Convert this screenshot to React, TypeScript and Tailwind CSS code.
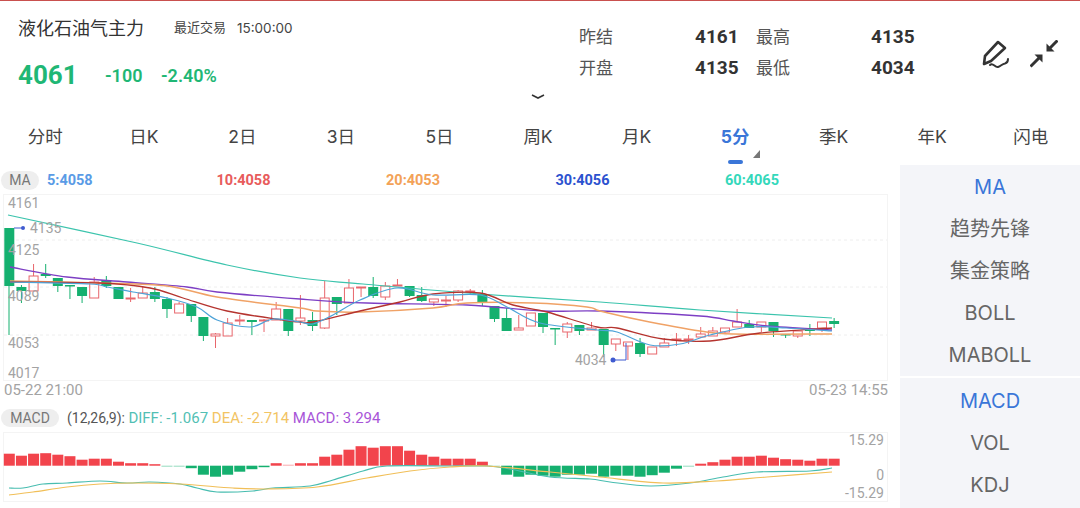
import React from 'react';

// [wickTop, bodyTop, bodyBottom, wickBottom, up]
type Candle = [number, number, number, number, 0 | 1];
type Pt = [number, number];

const candles: Candle[] = [
  [228, 228, 286, 335, 0], [285, 287, 291, 303, 0], [264, 276, 291, 291, 1], [264, 274, 276, 278, 0],
  [278, 278, 286, 292, 0], [285, 285, 286, 299, 0], [287, 287, 296, 303, 0], [277, 282, 298, 298, 1],
  [276, 280, 286, 288, 0], [287, 287, 299, 299, 0], [288, 298, 299, 302, 1], [286, 293, 298, 298, 1],
  [287, 292, 299, 302, 0], [297, 299, 309, 318, 0], [302, 304, 313, 313, 1], [304, 304, 316, 322, 0],
  [317, 317, 336, 341, 0], [333, 334, 336, 348, 1], [318, 323, 336, 336, 1], [315, 320, 321, 325, 1],
  [320, 320, 322, 335, 0], [319, 320, 321, 332, 1], [302, 309, 320, 320, 1], [309, 309, 331, 336, 0],
  [295, 318, 321, 325, 1], [312, 320, 326, 331, 0], [281, 298, 328, 329, 1], [297, 297, 304, 315, 0],
  [279, 288, 303, 303, 1], [287, 287, 288, 297, 1], [277, 287, 296, 298, 0], [282, 286, 297, 300, 1],
  [279, 285, 286, 286, 1], [286, 286, 296, 297, 0], [287, 295, 301, 302, 0], [299, 299, 302, 306, 1],
  [296, 300, 301, 307, 1], [290, 291, 300, 302, 1], [289, 291, 292, 295, 1], [290, 294, 303, 306, 0],
  [306, 306, 319, 322, 0], [308, 318, 331, 331, 0], [315, 328, 330, 330, 1], [313, 313, 326, 326, 1],
  [313, 313, 327, 333, 0], [328, 328, 329, 345, 0], [322, 324, 332, 338, 1], [325, 325, 331, 335, 0],
  [322, 328, 330, 330, 1], [329, 329, 345, 357, 0], [339, 339, 344, 351, 1], [342, 342, 346, 360, 1],
  [338, 343, 354, 357, 0], [347, 347, 354, 354, 1], [338, 343, 347, 347, 1], [333, 339, 340, 346, 1],
  [335, 339, 340, 344, 1], [327, 334, 337, 338, 1], [327, 331, 336, 336, 1], [328, 328, 332, 333, 1],
  [309, 322, 327, 327, 1], [320, 324, 328, 328, 0], [322, 322, 327, 332, 1], [322, 322, 331, 337, 0],
  [334, 334, 335, 338, 0], [331, 331, 336, 338, 1], [324, 329, 331, 336, 0], [322, 322, 328, 332, 1],
  [318, 321, 324, 328, 0],
];

const ma60: Pt[] = [[8, 215], [137, 243], [227, 265], [300, 278], [363, 284], [480, 294], [600, 302], [700, 310], [832, 318]];
const ma30: Pt[] = [[10, 267], [67, 277], [127, 282], [187, 287], [217, 292], [300, 299], [367, 303], [467, 305], [543, 311], [600, 311], [700, 316], [733, 321], [767, 326], [832, 330]];
const ma20: Pt[] = [[10, 281], [100, 283], [167, 286], [217, 297], [300, 308], [317, 311], [360, 312], [433, 308], [467, 303], [533, 303], [587, 307], [600, 311], [640, 320], [700, 331], [733, 334], [832, 334]];
const ma10: Pt[] = [[10, 282], [100, 283], [150, 288], [183, 298], [227, 311], [283, 320], [300, 322], [313, 322], [360, 311], [400, 302], [433, 294], [480, 293], [513, 305], [547, 312], [597, 327], [617, 328], [663, 339], [710, 341], [760, 333], [832, 328]];
const ma5: Pt[] = [[10, 282], [90, 284], [107, 287], [133, 292], [167, 298], [197, 307], [217, 320], [250, 327], [273, 319], [300, 322], [313, 324], [333, 315], [360, 300], [397, 288], [433, 295], [480, 295], [507, 307], [540, 323], [597, 330], [617, 332], [650, 345], [680, 344], [710, 335], [750, 327], [787, 328], [832, 331]];

const macdBars = [
  12, 10, 12, 12.5, 11, 9.5, 6, 7, 7, 4, 2.5, 2.5, 1.5, -1, -1, -2.5, -9, -11, -9, -6, -3.5, -1.5, 2.5, 1, 2.5,
  2.5, 9, 11, 16, 19.5, 18, 19.5, 19.5, 15, 11, 9, 7, 7, 7, 4, -0.5, -9, -11, -9, -10, -11, -9, -9, -8, -11, -10,
  -10, -11, -9.5, -7, -3, -1, 2, 3.5, 6, 9, 9, 10, 8, 6.5, 6, 5, 7, 7,
];

const diff: Pt[] = [[9, 488], [23, 488], [43, 484], [67, 483], [100, 481], [127, 483], [150, 482], [180, 484], [197, 488], [217, 492], [253, 491], [273, 488], [310, 486], [333, 480], [363, 471], [387, 466], [450, 466], [487, 466], [510, 469], [550, 477], [590, 479], [610, 482], [650, 486], [690, 483], [723, 477], [757, 472], [810, 471], [832, 468]];
const dea: Pt[] = [[9, 495], [33, 492], [67, 487], [100, 484], [133, 483], [180, 484], [233, 488], [267, 489], [317, 487], [367, 478], [410, 471], [450, 467], [487, 466], [550, 472], [600, 477], [663, 483], [717, 481], [767, 477], [832, 472]];

const xAt = (i: number) => 9.3 + 12.13 * i;

// Catmull-Rom through the sampled points
function smooth(pts: Pt[]) {
  let d = `M${pts[0][0]} ${pts[0][1]}`;
  for (let i = 0; i < pts.length - 1; i++) {
    const p0 = pts[i - 1] ?? pts[i];
    const p1 = pts[i];
    const p2 = pts[i + 1];
    const p3 = pts[i + 2] ?? p2;
    const c1x = p1[0] + (p2[0] - p0[0]) / 6;
    const c1y = p1[1] + (p2[1] - p0[1]) / 6;
    const c2x = p2[0] - (p3[0] - p1[0]) / 6;
    const c2y = p2[1] - (p3[1] - p1[1]) / 6;
    d += ` C${c1x} ${c1y} ${c2x} ${c2y} ${p2[0]} ${p2[1]}`;
  }
  return d;
}

const cjk = "font-['Inter','Noto_Sans_CJK_SC',sans-serif]";
const num = "font-['Roboto','Noto_Sans_CJK_SC',sans-serif]";

function Header() {
  return (
    <div className="flex h-[88px]">
      <div className="w-[579px] pl-[18px] pt-[15px]">
        <div className="flex items-center h-[24px]">
          <span className="text-[18px] text-[#333] w-[156px]">液化石油气主力</span>
          <span className="text-[13px] text-[#444]">最近交易</span>
          <span className="text-[13.5px] text-[#444] ml-[11px]">15:00:00</span>
        </div>
        <div className={`flex items-center h-[36px] mt-[17px] font-bold text-[#1fb775] ${num}`}>
          <span className="text-[26px] w-[87px]">4061</span>
          <span className="text-[18px] w-[56px] font-semibold">-100</span>
          <span className="text-[18px] font-semibold">-2.40%</span>
        </div>
      </div>
      <div className="grid grid-cols-[116px_61px_115px_44px] auto-rows-[31px] items-center pt-[21px] h-fit">
        <span className="text-[17px] text-[#555]">昨结</span>
        <span className={`text-[19px] font-bold text-[#333] ${num}`}>4161</span>
        <span className="text-[17px] text-[#555]">最高</span>
        <span className={`text-[19px] font-bold text-[#333] ${num}`}>4135</span>
        <span className="text-[17px] text-[#555]">开盘</span>
        <span className={`text-[19px] font-bold text-[#333] ${num}`}>4135</span>
        <span className="text-[17px] text-[#555]">最低</span>
        <span className={`text-[19px] font-bold text-[#333] ${num}`}>4034</span>
      </div>
      <div className="flex ml-[67px] pt-[39px] gap-[21px] h-fit">
        <svg width="27" height="31" viewBox="0 0 27 31" fill="none" stroke="#333" strokeWidth="2.6" strokeLinecap="round" strokeLinejoin="round">
          <path d="M16 2 L23 8 L9 21 L2 24 L3 16 Z" />
          <path d="M8 25 C11 22 13 28 16 27 C19 26 20 24 23 23.5 C25 23 26 21 26 19" strokeWidth="2" />
        </svg>
        <svg width="28" height="29" viewBox="0 0 28 29" fill="#333" stroke="#333">
          <path d="M27.5 0.5 L20 8" strokeWidth="3" />
          <path d="M16.5 3.5 L24.5 11.5 L16.5 11.5 Z" strokeWidth="0" />
          <path d="M0.5 26.5 L9 18" strokeWidth="3" />
          <path d="M12.5 14.5 L12.5 22.5 L4.5 14.5 Z" strokeWidth="0" />
        </svg>
      </div>
    </div>
  );
}

function Tabs() {
  const tabs = ['分时', '日K', '2日', '3日', '5日', '周K', '月K', '5分', '季K', '年K', '闪电'];
  return (
    <div className="flex w-[1084px] -ml-[4px] h-[61px] pt-[22px]">
      {tabs.map((t) => {
        const active = t === '5分';
        return (
          <div key={t} className={`relative flex-1 h-[22px] flex justify-center items-center text-[17.5px] ${active ? 'text-[#3a76d8] font-bold' : 'text-[#444]'}`}>
            {t}
            {active && (
              <>
                <span className="absolute left-[42px] top-[34px] w-[15px] h-[4px] rounded-full bg-[#3a76d8]" />
                <svg className="absolute left-[67px] top-[24px]" width="7" height="8" viewBox="0 0 7 8">
                  <path d="M7 0 V8 H0 Z" fill="#777" />
                </svg>
              </>
            )}
          </div>
        );
      })}
    </div>
  );
}

function PriceChart() {
  return (
    <svg width="900" height="187" viewBox="0 194 900 187" className={`block ${num}`}>
      <rect x="3.5" y="194.5" width="884" height="186" fill="none" stroke="#f4f4f4" />
      {[240, 287, 335].map((y) => (
        <line key={y} x1="4" x2="887" y1={y} y2={y} stroke="#eeeeee" strokeDasharray="3 3" />
      ))}
      {candles.map(([wt, bt, bb, wb, up], i) => {
        const x = xAt(i);
        const c = up ? '#e8666c' : '#15b06f';
        const wx = i === 0 ? 9 : x;
        return (
          <g key={i}>
            <line x1={wx} x2={wx} y1={wt} y2={bt} stroke={c} />
            <line x1={wx} x2={wx} y1={bb} y2={wb} stroke={c} />
            {up ? (
              <rect x={x - 4.5} y={bt} width={9} height={Math.max(bb - bt, 1)} fill="none" stroke={c} />
            ) : (
              <rect x={x - 5} y={bt} width={10} height={Math.max(bb - bt, 1.5)} fill={c} />
            )}
          </g>
        );
      })}
      <path d={smooth(ma60)} fill="none" stroke="#3cc4ad" strokeWidth="1.2" />
      <path d={smooth(ma30)} fill="none" stroke="#7d3fc4" strokeWidth="1.3" />
      <path d={smooth(ma20)} fill="none" stroke="#f0a266" strokeWidth="1.5" />
      <path d={smooth(ma10)} fill="none" stroke="#b5342f" strokeWidth="1.3" />
      <path d={smooth(ma5)} fill="none" stroke="#4ea3d8" strokeWidth="1.2" />
      <path d="M14 228 H23" stroke="#3f5bd0" />
      <circle cx="23" cy="228" r="2" fill="#3f5bd0" />
      <path d="M613 360 H626 V343" stroke="#3f5bd0" fill="none" />
      <circle cx="613" cy="360" r="2.5" fill="#3f5bd0" />
      {[
        ['4161', 8, 208],
        ['4135', 30, 233],
        ['4125', 8, 255],
        ['4089', 8, 301],
        ['4053', 8, 348],
        ['4017', 8, 378],
        ['4034', 575, 365],
      ].map(([t, x, y]) => (
        <text key={String(t)} x={x} y={y} fontSize="14" fill="#a3a3a3">{t}</text>
      ))}
    </svg>
  );
}

function MacdChart() {
  return (
    <svg width="900" height="70" viewBox="0 432 900 70" className={`block ${num}`}>
      <rect x="3.5" y="432.5" width="884" height="69" fill="none" stroke="#f4f4f4" />
      {macdBars.map((v, i) => {
        const x = xAt(i) - 5.5;
        const zero = 465.7;
        const faint = Math.abs(v) <= 1;
        const fill = v > 0 ? '#f2444c' : '#15b06f';
        return <rect key={i} x={x} y={v > 0 ? zero - v : zero} width={11} height={Math.abs(v)} fill={fill} opacity={faint ? 0.45 : 1} />;
      })}
      <path d={smooth(diff)} fill="none" stroke="#48bdb0" strokeWidth="1.2" />
      <path d={smooth(dea)} fill="none" stroke="#f1bf58" strokeWidth="1.2" />
      <text x="884" y="445" textAnchor="end" fontSize="14" fill="#a3a3a3">15.29</text>
      <text x="884" y="480" textAnchor="end" fontSize="14" fill="#a3a3a3">0</text>
      <text x="884" y="498" textAnchor="end" fontSize="14" fill="#a3a3a3">-15.29</text>
    </svg>
  );
}

function Sidebar() {
  const groupA = ['MA', '趋势先锋', '集金策略', 'BOLL', 'MABOLL'];
  const groupB = ['MACD', 'VOL', 'KDJ'];
  const item = (t: string, active: boolean) => (
    <div key={t} className={`h-[42px] flex items-center justify-center text-[20px] ${active ? 'text-[#3a76d8]' : 'text-[#666]'}`}>
      {t}
    </div>
  );
  return (
    <div className="w-[180px] flex flex-col gap-[2px]">
      <div className="bg-[#f4f5f9] h-[211px] pt-px">
        {groupA.map((t, i) => item(t, i === 0))}
      </div>
      <div className="bg-[#f4f5f9] flex-1 pt-[2px]">
        {groupB.map((t, i) => item(t, i === 0))}
      </div>
    </div>
  );
}

export default function App() {
  const legend = [
    ['5:4058', 'text-[#5a9be6]'],
    ['10:4058', 'text-[#e85c5c]'],
    ['20:4053', 'text-[#f3a257]'],
    ['30:4056', 'text-[#2b52cf]'],
    ['60:4065', 'text-[#34d8bb]'],
  ];
  return (
    <div className={`w-[1080px] h-[508px] bg-white overflow-hidden ${cjk}`}>
      <div className="h-px bg-[#c9504e]" />
      <Header />
      <div className="h-[15px] flex justify-center items-center">
        <svg width="14" height="5" viewBox="0 0 14 5" fill="none" stroke="#333" strokeWidth="1.6" className="-ml-[4px]">
          <path d="M1 1 L7 4 L13 1" />
        </svg>
      </div>
      <Tabs />
      <div className="flex h-[343px]">
        <div className="w-[900px]">
          <div className={`h-[29px] flex items-center pt-[2px] ${num}`}>
            <span className="ml-px w-[38px] h-[19px] rounded-full bg-[#eeeeee] text-[#777] text-[14px] flex items-center justify-center">MA</span>
            <div className="flex ml-[8px]">
              {legend.map(([t, c]) => (
                <span key={t} className={`w-[169.5px] text-[14.5px] font-bold ${c}`}>{t}</span>
              ))}
            </div>
          </div>
          <PriceChart />
          <div className={`h-[19px] flex items-center justify-between pl-[4px] pr-[12px] text-[15px] text-[#a3a3a3] ${num}`}>
            <span>05-22 21:00</span>
            <span>05-23 14:55</span>
          </div>
          <div className={`h-[32px] pt-[9px] flex items-start text-[15px] ${num}`}>
            <span className="ml-px w-[58px] h-[18px] rounded-full bg-[#eeeeee] text-[#777] text-[14px] flex items-center justify-center">MACD</span>
            <div className="flex ml-[8px] h-[18px] items-center whitespace-pre">
              <span className="text-[#555] text-[14px]">(12,26,9): </span>
              <span className="text-[#52bfb4]">DIFF: -1.067 </span>
              <span className="text-[#f2c464]">DEA: -2.714 </span>
              <span className="text-[#a855d8]">MACD: 3.294</span>
            </div>
          </div>
          <MacdChart />
        </div>
        <Sidebar />
      </div>
    </div>
  );
}
